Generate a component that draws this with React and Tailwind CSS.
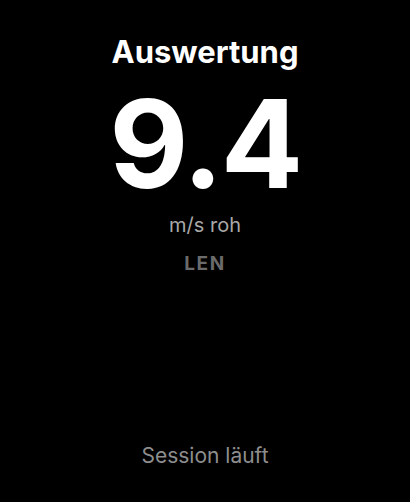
export default function App() {
  return (
    <div className="w-[410px] h-[502px] bg-black flex flex-col items-center text-center" style={{ fontFamily: 'Inter, "Noto Sans", sans-serif' }}>
      <div className="mt-[34px] text-[31px] leading-[36px] font-bold text-white">Auswertung</div>
      <div className="mt-[24px] text-[122px] leading-[100px] font-bold text-white tracking-[-0.02em]">9.4</div>
      <div className="mt-[19px] text-[20px] leading-[24px] text-[#a8a8a8]">m/s roh</div>
      <div className="mt-[15px] text-[19px] leading-[24px] font-bold text-[#6b6b6b] tracking-[0.08em]">LEN</div>
      <div className="flex-1" />
      <div className="mb-[34px] text-[21px] leading-[24px] text-[#8e8e8e]">Session läuft</div>
    </div>
  );
}
